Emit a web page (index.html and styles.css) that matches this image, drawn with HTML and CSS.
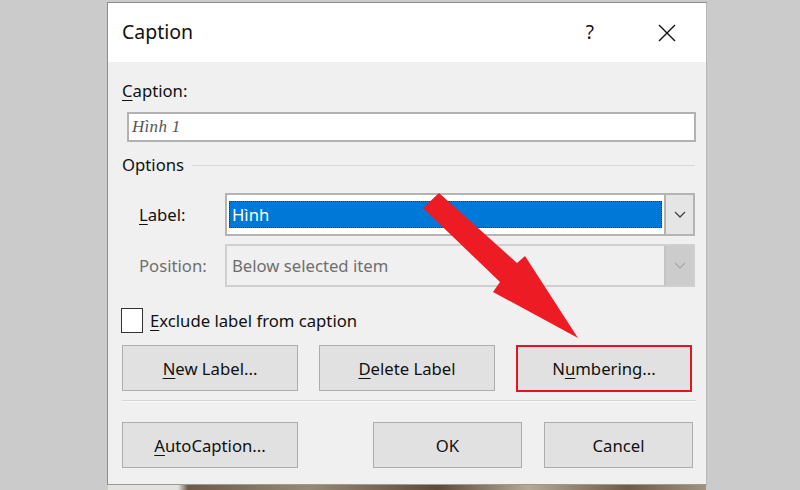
FILE: index.html
```html
<!DOCTYPE html>
<html lang="en">
<head>
    <meta charset="UTF-8">
    <title>Caption</title>
    <link rel="stylesheet" href="styles.css">
</head>
<body>
    <div class="dialog">
        <div class="titlebar">
            <span class="title">Caption</span>
            <span class="help">?</span>
            <svg class="close" viewBox="0 0 18 18" width="18" height="18">
                <path d="M1 1 L17 17 M17 1 L1 17" stroke="#111" stroke-width="1.4" fill="none"/>
            </svg>
        </div>

        <div class="body">
            <div class="field-label"><u>C</u>aption:</div>
            <div class="textbox">Hình 1</div>

            <div class="group-title">
                <span>Options</span>
                <span class="group-line"></span>
            </div>

            <div class="row">
                <span class="row-label"><u>L</u>abel:</span>
                <div class="combo">
                    <div class="combo-value"><span class="selected">Hình</span></div>
                    <div class="combo-btn">
                        <svg viewBox="0 0 12 7" width="12" height="7"><path d="M1 1 L6 6 L11 1" stroke="#444" stroke-width="1.3" fill="none"/></svg>
                    </div>
                </div>
            </div>

            <div class="row disabled">
                <span class="row-label">Position:</span>
                <div class="combo">
                    <div class="combo-value">Below selected item</div>
                    <div class="combo-btn">
                        <svg viewBox="0 0 12 7" width="12" height="7"><path d="M1 1 L6 6 L11 1" stroke="#a8a8a8" stroke-width="1.3" fill="none"/></svg>
                    </div>
                </div>
            </div>

            <label class="check">
                <span class="box"></span>
                <span><u>E</u>xclude label from caption</span>
            </label>

            <div class="buttons-top">
                <div class="btn"><u>N</u>ew Label...</div>
                <div class="btn"><u>D</u>elete Label</div>
                <div class="btn marked">N<u>u</u>mbering...</div>
            </div>

            <div class="separator"></div>

            <div class="buttons-bottom">
                <div class="btn"><u>A</u>utoCaption...</div>
                <div class="btn short push">OK</div>
                <div class="btn short">Cancel</div>
            </div>
        </div>
    </div>
    <div class="photo-strip"></div>

    <!-- red pointer drawn over the dialog -->
    <svg class="arrow" viewBox="0 0 800 490" width="800" height="490">
        <polygon points="439,193 517,263 525,256 578,338 493,292 500,282 423,208" fill="#ed1c24"/>
    </svg>
</body>
</html>
```

FILE: styles.css
```css
html, body {
    margin: 0;
    padding: 0;
}
body {
    background: #cbcbcb;
    font-family: "Noto Sans", "Open Sans", sans-serif;
    font-size: 16.7px;
    color: #111;
    padding-top: 2px;
    width: 800px;
    height: 488px;
    overflow: hidden;
    position: relative;
}
u {
    text-decoration-thickness: 1px;
    text-underline-offset: 3px;
}
.dialog {
    margin-left: 107px;
    width: 598px;
    border-top: 1px solid #8c8c8c;
    border-left: 1px solid #8c8c8c;
    border-right: 1px solid #b8b8b8;
    border-bottom: 1px solid #9a9a9a;
}
.titlebar {
    height: 59px;
    background: #fff;
    display: flex;
    align-items: center;
}
.title {
    font-size: 19.5px;
    margin-left: 14px;
    flex: 1;
    padding-bottom: 2px;
}
.help {
    font-size: 19px;
    margin-right: 64px;
    padding-bottom: 2px;
}
.close {
    margin-right: 30px;
}
.body {
    background: #f0f0f0;
    padding: 0 10px 0 14px;
    height: 422px;
    display: flex;
    flex-direction: column;
}
.field-label {
    margin-top: 18px;
    line-height: 22px;
}
.textbox {
    margin-top: 10px;
    margin-left: 5px;
    height: 26px;
    border: 2px solid #b2b2b2;
    background: #fff;
    font-family: "Liberation Serif", serif;
    font-style: italic;
    font-size: 17px;
    letter-spacing: 0.3px;
    color: #555;
    line-height: 26px;
    padding-left: 3px;
}
.group-title {
    margin-top: 12px;
    height: 22px;
    line-height: 22px;
    display: flex;
    align-items: center;
}
.group-line {
    flex: 1;
    height: 1px;
    background: #d8d8d8;
    margin-left: 8px;
    margin-right: 1px;
}
.row {
    display: flex;
    align-items: center;
    margin-top: 17px;
}
.row.disabled {
    margin-top: 8px;
    color: #6f6f6f;
}
.row-label {
    width: 86px;
    padding-left: 17px;
}
.combo {
    flex: 1;
    height: 43px;
    display: flex;
    border: 2px solid #b4b4b4;
    box-sizing: border-box;
    background: #fff;
    margin-right: 1px;
}
.combo-value {
    flex: 1;
    display: flex;
    align-items: center;
    padding: 0 2px;
}
.selected {
    display: block;
    width: 100%;
    height: 27px;
    line-height: 27px;
    background: #0078d7;
    color: #fff;
    padding-left: 3px;
    outline: 1px dotted #333;
    outline-offset: -1px;
}
.combo-btn {
    width: 27px;
    border-left: 2px solid #b4b4b4;
    background: #e5e5e5;
    display: flex;
    align-items: center;
    justify-content: center;
}
.disabled .combo {
    background: #f0f0f0;
    border-color: #cfcfcf;
}
.disabled .combo-value {
    padding-left: 5px;
}
.disabled .combo-btn {
    background: #cccccc;
    border-left-color: #c4c4c4;
}
.check {
    margin-top: 21px;
    height: 25px;
    display: flex;
    align-items: center;
    margin-left: -1px;
}
.box {
    width: 20px;
    height: 23px;
    border: 1px solid #333;
    background: #fff;
    margin-right: 7px;
}
.btn {
    height: 46px;
    box-sizing: border-box;
    background: #e1e1e1;
    border: 1px solid #adadad;
    display: flex;
    align-items: center;
    justify-content: center;
}
.buttons-top {
    margin-top: 12px;
    display: grid;
    grid-template-columns: 176px 176px 176px;
    gap: 21px;
}
.btn.marked {
    border: 2px solid #e3141d;
    height: 47px;
}
.separator {
    margin-top: 8px;
    height: 1px;
    background: #d6d6d6;
    border-bottom: 1px solid #fafafa;
}
.buttons-bottom {
    margin-top: 20px;
    display: flex;
    gap: 22px;
}
.buttons-bottom .btn {
    width: 176px;
}
.buttons-bottom .btn.short {
    width: 149px;
}
.buttons-bottom .push {
    margin-left: 53px;
}
.photo-strip {
    margin-left: 108px;
    width: 598px;
    height: 6px;
    background: linear-gradient(90deg, #e4e2df 0, #e4e2df 70px, #6d5a4a 80px, #9a8876 200px, #5e4a3b 330px, #b7a794 420px, #6f5b47 520px, #a39280 598px);
}
.arrow {
    position: absolute;
    left: 0;
    top: 0;
    pointer-events: none;
}
```
